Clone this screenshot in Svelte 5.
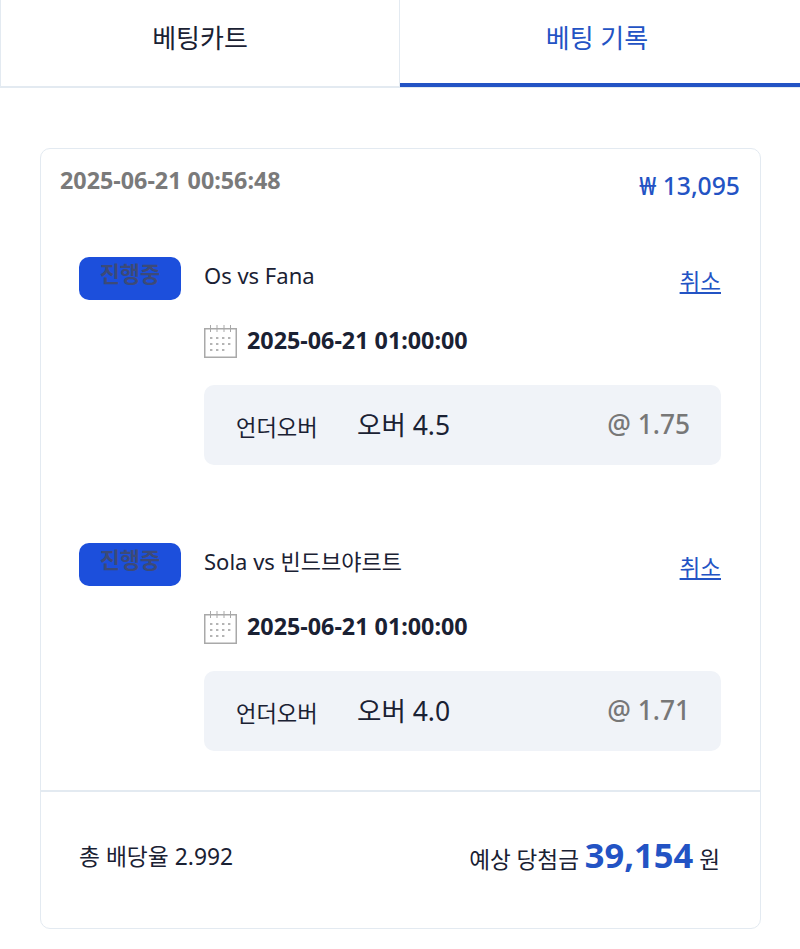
<script>
  const bets = [
    { match: "Os vs Fana", time: "2025-06-21 01:00:00", market: "언더오버", pick: "오버 4.5", odds: "1.75" },
    { match: "Sola vs 빈드브야르트", time: "2025-06-21 01:00:00", market: "언더오버", pick: "오버 4.0", odds: "1.71" },
  ];
</script>

<div class="page">
  <nav class="tabs">
    <button class="tab">베팅카트</button>
    <button class="tab active">베팅 기록</button>
  </nav>

  <section class="card">
    <header class="card-head">
      <span class="placed">2025-06-21 00:56:48</span>
      <span class="stake">₩ 13,095</span>
    </header>

    <div class="bets">
      {#each bets as bet (bet.match)}
        <article class="bet">
          <span class="badge">진행중</span>
          <div class="bet-body">
            <div class="bet-top">
              <span class="match">{bet.match}</span>
              <a class="cancel" href="#cancel">취소</a>
            </div>
            <div class="kickoff">
              <svg viewBox="0 0 34 34" width="34" height="34" fill="none" aria-hidden="true">
                <path d="M.75 4.750h31.500v28.500H.75z" stroke="#a9a9a9" stroke-width="1.500" />
                <path d="M6.500 1v7M13 1v7M20 1v7M26.500 1v7" stroke="#a9a9a9" />
                <path d="M6 14h2.400M12 14h2.400M18 14h2.400M24 14h2.400M6 20h2.400M12 20h2.400M18 20h2.400M24 20h2.400M6 26h2.400M12 26h2.400M18 26h2.400" stroke="#b4b4b4" stroke-width="2" />
              </svg>
              <strong>{bet.time}</strong>
            </div>
            <div class="pick-row">
              <span class="market">{bet.market}</span>
              <span class="pick">{bet.pick}</span>
              <span class="odds">@ {bet.odds}</span>
            </div>
          </div>
        </article>
      {/each}
    </div>

    <footer class="card-foot">
      <span class="total-odds">총 배당율 2.992</span>
      <span class="payout">예상 당첨금 <b>39,154</b> 원</span>
    </footer>
  </section>
</div>

<style>
  :global(body) {
    margin: 0;
    background: #fff;
    font-family: "Noto Sans", "Noto Sans CJK KR", sans-serif;
    color: #1a2133;
  }
  .page {
    width: 800px;
    height: 949px;
    overflow: hidden;
  }
  .tabs {
    display: grid;
    grid-template-columns: 400px 400px;
    height: 88px;
    background: #e3eaf1;
  }
  .tab {
    border: 0;
    border-left: 1px solid #e3eaf1;
    border-right: 1px solid #e3eaf1;
    border-bottom: 2px solid #e3eaf1;
    background: #fff;
    color: #1a2133;
    font: inherit;
    font-size: 26px;
    padding: 0 0 12px;
  }
  .tab.active {
    margin-bottom: 1px;
    border-left: 0;
    border-right: 0;
    border-bottom: 4px solid #2353c4;
    color: #2353c4;
    padding: 0 6px 9px 0;
  }
  .card {
    margin: 60px 39px 0 40px;
    height: 781px;
    box-sizing: border-box;
    border: 1px solid #e3eaf1;
    border-radius: 10px;
    display: flex;
    flex-direction: column;
  }
  .card-head {
    display: flex;
    justify-content: space-between;
    padding: 12px 20px 0 19px;
  }
  .placed {
    color: #7a7a7a;
    font-size: 23.300px;
    font-weight: 700;
    line-height: 38px;
  }
  .stake {
    color: #2353c4;
    font-size: 24.700px;
    font-weight: 500;
    line-height: 38px;
    margin-top: 6px;
  }
  .bets {
    display: grid;
    gap: 78px;
    padding: 52px 39px 0 38px;
    flex: 1;
    align-content: start;
  }
  .bet {
    display: grid;
    grid-template-columns: 102px 1fr;
    gap: 23px;
    height: 208px;
  }
  .badge {
    height: 43px;
    border-radius: 10px;
    background: #1c4fdc;
    color: #3c4a78;
    font-size: 22px;
    font-weight: 700;
    line-height: 32px;
    text-align: center;
  }
  .bet-top {
    display: flex;
    justify-content: space-between;
    height: 59px;
  }
  .match {
    font-size: 22px;
    line-height: 36px;
  }
  .cancel {
    color: #2353c4;
    font-size: 22.500px;
    line-height: 50px;
  }
  .kickoff {
    display: flex;
    align-items: center;
    gap: 9px;
    height: 48px;
    margin-bottom: 21px;
  }
  .kickoff svg {
    margin-top: 2px;
  }
  .kickoff strong {
    font-size: 23.300px;
    font-weight: 700;
  }
  .pick-row {
    display: flex;
    align-items: center;
    height: 80px;
    padding: 0 31px 0 32px;
    border-radius: 10px;
    background: #f0f3f8;
  }
  .market {
    font-size: 22.200px;
    width: 121px;
    padding-top: 2px;
  }
  .pick {
    font-size: 26.500px;
    padding-bottom: 4px;
  }
  .odds {
    margin-left: auto;
    color: #777;
    font-size: 26.300px;
    font-weight: 500;
    padding-bottom: 2px;
  }
  .card-foot {
    display: flex;
    justify-content: space-between;
    align-items: center;
    height: 126px;
    padding: 0 40px 10px 38px;
    border-top: 2px solid #e3eaf1;
  }
  .total-odds {
    font-size: 22.800px;
  }
  .payout {
    font-size: 22.600px;
    margin-bottom: 2px;
  }
  .payout b {
    color: #2353c4;
    font-size: 34.500px;
    font-weight: 700;
  }
</style>
